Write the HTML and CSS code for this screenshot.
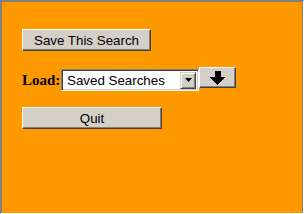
FILE: index.html
```html
<!DOCTYPE html>
<html>
<head>
<meta charset="utf-8">
<link rel="stylesheet" href="styles.css">
</head>
<body>
<div class="frame">
  <div class="panel">
    <button class="btn btn-save">Save This Search</button>
    <div class="load-row">
      <span class="load-label">Load:</span>
      <div class="select">
        <span class="select-text">Saved Searches</span>
        <span class="drop">
          <svg width="7" height="4" viewBox="0 0 7 4"><polygon points="0,0 7,0 3.5,4" fill="#000"/></svg>
        </span>
      </div>
      <button class="btn btn-load" aria-label="Load">
        <svg width="15" height="14" viewBox="0 0 15 14" shape-rendering="crispEdges"><polygon points="5,0 11,0 11,6 15,6 8,14 7,14 0,6 5,6" fill="#000"/></svg>
      </button>
    </div>
    <button class="btn btn-quit">Quit</button>
  </div>
</div>
</body>
</html>
```
FILE: styles.css
```css
html, body {
  margin: 0;
  padding: 0;
}
body {
  width: 304px;
  height: 214px;
  overflow: hidden;
}
.frame {
  box-sizing: border-box;
  width: 304px;
  height: 214px;
  border-style: solid;
  border-width: 1px;
  border-color: #808080 #ffffff #ffffff #808080;
}
.panel {
  box-sizing: border-box;
  height: 100%;
  background: #ff9900;
  border-style: solid;
  border-width: 1px 1px 0 1px;
  border-color: #808080;
  padding: 27px 0 0 20px;
  display: flex;
  flex-direction: column;
  align-items: flex-start;
  gap: 16px;
}
.btn {
  box-sizing: border-box;
  margin: 0;
  padding: 0;
  height: 22px;
  background: #d4d0c8;
  border: 1px solid;
  border-color: #ffffff #404040 #404040 #ffffff;
  box-shadow: inset -1px -1px 0 #808080;
  font-family: "Liberation Sans", Arial, sans-serif;
  font-size: 13.33px;
  color: #000;
  display: flex;
  align-items: center;
  justify-content: center;
}
.btn-save {
  width: 129px;
}
.btn-quit {
  width: 140px;
}
.load-row {
  display: flex;
  align-items: flex-start;
  height: 24px;
}
.load-label {
  font-family: "Liberation Serif", "Times New Roman", serif;
  font-weight: bold;
  font-size: 15px;
  line-height: 18px;
  margin-top: 4px;
  color: #000;
  width: 39px;
}
.select {
  box-sizing: border-box;
  width: 138px;
  height: 22px;
  margin-top: 2px;
  background: #fff;
  border: 1px solid;
  border-color: #808080 #ffffff #ffffff #808080;
  box-shadow: inset 1px 1px 0 #404040, inset -1px -1px 0 #d4d0c8;
  display: flex;
  align-items: center;
  padding: 1px 2px 1px 5px;
}
.select-text {
  flex: 1;
  font-family: "Liberation Sans", Arial, sans-serif;
  font-size: 13.33px;
  color: #000;
  white-space: nowrap;
}
.drop {
  box-sizing: border-box;
  width: 16px;
  height: 17px;
  background: #d4d0c8;
  border: 1px solid;
  border-color: #d4d0c8 #404040 #404040 #d4d0c8;
  box-shadow: inset 1px 1px 0 #ffffff, inset -1px -1px 0 #808080;
  display: flex;
  align-items: center;
  justify-content: center;
}
.btn-load {
  width: 37px;
  height: 21px;
}
```
